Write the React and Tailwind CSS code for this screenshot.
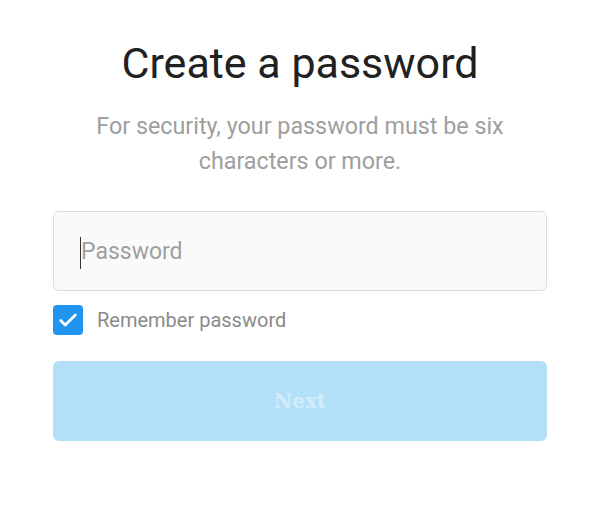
import React from "react";

export default function App() {
  return (
    <div className="w-[600px] h-[517px] bg-white flex flex-col items-center" style={{ fontFamily: "Roboto, 'Liberation Sans', sans-serif" }}>
      <h1 className="mt-[36px] text-[43px] leading-[54px] text-[#212121] font-normal">Create a password</h1>
      <p className="mt-[19px] w-[470px] text-center text-[23.3px] leading-[35px] text-[#9e9e9e]">
        For security, your password must be six characters or more.
      </p>
      <div className="mt-[32px] w-[494px] h-[80px] rounded-[6px] border border-[#dcdcdc] bg-[#fafafa] flex items-center pl-[26px] pt-[3px]">
        <div className="w-px h-[32px] bg-[#333]" />
        <span className="text-[23px] text-[#a0a0a0]">Password</span>
      </div>
      <div className="mt-[14px] w-[494px] flex items-center">
        <div className="w-[30px] h-[30px] rounded-[4px] bg-[#1e96f0] flex items-center justify-center">
          <svg width="22" height="22" viewBox="0 0 24 24" fill="none" stroke="white" strokeWidth="3" strokeLinecap="round" strokeLinejoin="round">
            <path d="M4 12.5l5 5L20 6.5" />
          </svg>
        </div>
        <span className="ml-[14px] text-[20px] text-[#8a8a8a]">Remember password</span>
      </div>
      <button className="mt-[26px] w-[494px] h-[80px] rounded-[6px] bg-[#b3dff8] text-[20px] font-bold text-[#d2ecfb]" style={{ fontFamily: "'DejaVu Serif', serif" }}>
        Next
      </button>
    </div>
  );
}
